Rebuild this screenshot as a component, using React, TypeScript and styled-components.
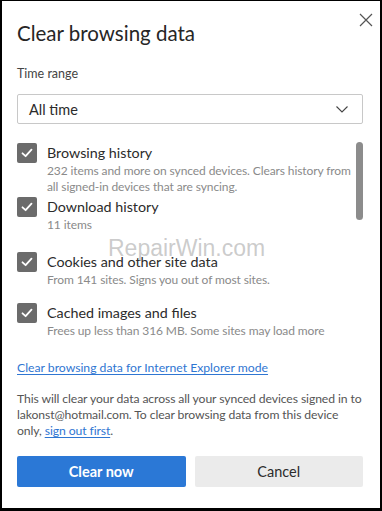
import React from 'react'
import styled, { createGlobalStyle } from 'styled-components'

const GlobalStyle = createGlobalStyle`
  body {
    margin: 0;
    background: #ffffff;
    font-family: Lato, "Noto Sans", sans-serif;
  }
`;

interface IItem {
  label: string,
  description: Array<string>,
  space: number
}

const items: Array<IItem> = [
  {
    label: 'Browsing history',
    description: [
      '232 items and more on synced devices. Clears history from',
      'all signed-in devices that are syncing.'
    ],
    space: 2
  },
  { label: 'Download history', description: ['11 items'], space: 19 },
  { label: 'Cookies and other site data', description: ['From 141 sites. Signs you out of most sites.'], space: 15 },
  { label: 'Cached images and files', description: ['Frees up less than 316 MB. Some sites may load more'], space: 0 }
];

const Frame = styled.div`
  position: relative;
  box-sizing: border-box;
  width: 382px;
  height: 511px;
  border-top: 1px solid #000;
  border-left: 2px solid #000;
  border-right: 2px solid #000;
  border-bottom: 3px solid #000;
  padding: 18px 17px 0 15px;
  background: #fff;
  color: #2b2b2b;
`;

const Close = styled.button`
  position: absolute;
  top: 10px;
  right: 5px;
  width: 18px;
  height: 18px;
  padding: 0;
  border: none;
  background: none;
  display: flex;
  align-items: center;
  justify-content: center;
`;

const Title = styled.h1`
  margin: 0;
  font-size: 20.5px;
  line-height: 28px;
  font-weight: 400;
  color: #262626;
`;

const Label = styled.div`
  margin-top: 19px;
  font-size: 12.5px;
  line-height: 16px;
  color: #444;
`;

const Select = styled.div`
  margin-top: 12px;
  box-sizing: border-box;
  height: 30px;
  border: 1px solid #c8c8c8;
  border-radius: 2px;
  display: flex;
  align-items: center;
  justify-content: space-between;
  padding: 0 14px 0 11px;
  font-size: 14.5px;
  color: #2b2b2b;
`;

const List = styled.div`
  position: relative;
  margin-top: 19px;
`;

const Thumb = styled.div`
  position: absolute;
  top: -1px;
  right: 0;
  width: 7px;
  height: 78px;
  border-radius: 4px;
  background: #8c8c8c;
`;

const Row = styled.div<{ space: number }>`
  display: flex;
  gap: 10px;
  margin-bottom: ${props => props.space}px;
`;

const Box = styled.div`
  flex: none;
  width: 20px;
  height: 20px;
  border-radius: 2px;
  background: #6b6b6b;
  display: flex;
  align-items: center;
  justify-content: center;
`;

const Text = styled.div`
  display: flex;
  flex-direction: column;
`;

const ItemLabel = styled.div`
  font-size: 14.3px;
  line-height: 20px;
  color: #2b2b2b;
`;

const ItemDesc = styled.div`
  font-size: 12px;
  line-height: 16px;
  letter-spacing: -0.1px;
  color: #8a8a8a;
  white-space: nowrap;
`;

const Link = styled.a`
  display: inline-block;
  margin-top: 20px;
  font-size: 12.2px;
  line-height: 18px;
  color: #2f76d2;
  text-decoration: underline;
  text-underline-offset: 2px;
`;

const Note = styled.p`
  margin: 14px 0 0;
  font-size: 12.2px;
  line-height: 16px;
  letter-spacing: -0.1px;
  color: #555;
  a {
    color: #2f76d2;
    text-decoration: underline;
    text-underline-offset: 2px;
  }
`;

const Buttons = styled.div`
  display: grid;
  grid-template-columns: 1fr 1fr;
  gap: 9px;
  margin-top: 17px;
`;

const Button = styled.button<{ primary?: boolean }>`
  height: 31px;
  border: none;
  border-radius: 2px;
  font-family: inherit;
  font-size: 14.5px;
  font-weight: ${props => props.primary ? 700 : 400};
  color: ${props => props.primary ? '#fff' : '#2b2b2b'};
  background: ${props => props.primary ? '#2b78d6' : '#ebebeb'};
`;

const Watermark = styled.div`
  position: absolute;
  left: 106px;
  top: 234px;
  font-family: "Liberation Sans", sans-serif;
  font-size: 23px;
  color: rgba(160, 160, 160, 0.55);
  pointer-events: none;
`;

const Check = () => (
  <svg width="14" height="14" viewBox="0 0 14 14">
    <path d="M2.5 7.3 L5.6 10.2 L11.5 3.6" fill="none" stroke="#fff" strokeWidth="1.8" strokeLinecap="round" strokeLinejoin="round" />
  </svg>
)

const App = () => {
  return (
    <Frame>
      <GlobalStyle />
      <Close aria-label="Close">
        <svg width="14" height="14" viewBox="0 0 14 14">
          <path d="M1 1 L13 13 M13 1 L1 13" stroke="#555" strokeWidth="1.2" />
        </svg>
      </Close>
      <Title>Clear browsing data</Title>
      <Label>Time range</Label>
      <Select>
        <span>All time</span>
        <svg width="12" height="7" viewBox="0 0 12 7">
          <path d="M0.5 0.5 L6 6 L11.5 0.5" fill="none" stroke="#444" strokeWidth="1.1" />
        </svg>
      </Select>
      <List>
        <Thumb />
        {items.map(item => (
          <Row key={item.label} space={item.space}>
            <Box><Check /></Box>
            <Text>
              <ItemLabel>{item.label}</ItemLabel>
              {item.description.map(line => <ItemDesc key={line}>{line}</ItemDesc>)}
            </Text>
          </Row>
        ))}
      </List>
      <Link href="#">Clear browsing data for Internet Explorer mode</Link>
      <Note>
        This will clear your data across all your synced devices signed in to lakonst@hotmail.com. To clear browsing data from this device only, <a href="#">sign out first</a>.
      </Note>
      <Buttons>
        <Button primary>Clear now</Button>
        <Button>Cancel</Button>
      </Buttons>
      <Watermark>RepairWin.com</Watermark>
    </Frame>
  )
}

export default App;
